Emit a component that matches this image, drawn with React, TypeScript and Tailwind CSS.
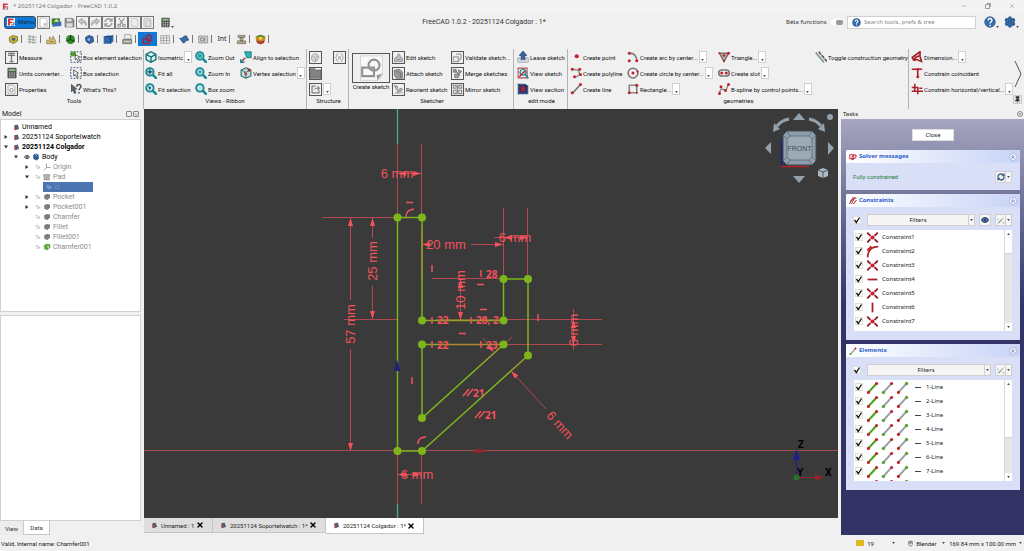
import React from 'react';
import { ChevronsUp, Eye, Minus, Pin, RefreshCw, Settings, X } from 'lucide-react';

const RED = '#a8202a';
const TEAL = '#168a94';
const GREY = '#9a9a9a';

const dot = (x: number, y: number, r = 2, fill = '#c4202c') => <circle cx={x} cy={y} r={r} fill={fill} />;

const lens = (inner: React.ReactNode) => (
  <>
    <path d="M9.5 9.5 L14.5 14.5" stroke={TEAL} strokeWidth="3.4" strokeLinecap="round" />
    <circle cx="6.5" cy="6.5" r="5" fill="#bfe6ea" stroke={TEAL} strokeWidth="2.4" />
    {inner}
  </>
);

const calculator = (
  <>
    <rect x="2" y="1" width="12" height="14" rx="1" fill="#4c524c" />
    <rect x="3.5" y="2.5" width="9" height="3" fill="#8fae8b" />
    <path d="M4 8h2M7 8h2M10 8h2M4 10.500h2M7 10.500h2M10 10.500h2M4 13h2M7 13h2M10 13h2" stroke="#c9cdc9" strokeWidth="1.3" />
  </>
);

const shape: Record<string, React.ReactNode> = {
  logo: (
    <>
      <path d="M2 1h11v3.500H6v3h5v3H6V15H2z" fill="#d8343c" />
      <path d="M13 8v6H8" fill="none" stroke="#4468b0" strokeWidth="2" />
    </>
  ),
  menuLogo: (
    <>
      <rect width="16" height="16" fill="#f4f4f4" />
      <path d="M2 1h11v3.500H6v3h5v3H6V15H2z" fill="#d8343c" />
      <path d="M14 8v6H8" fill="none" stroke="#4468b0" strokeWidth="2" />
    </>
  ),
  file: (
    <>
      <path d="M3 1.500h7l3 3v10H3z" fill="#fff" stroke="#a9a9a9" />
      <path d="M10 8v5M7.500 10.500h5" stroke="#9a9a9a" />
    </>
  ),
  open: (
    <>
      <rect x="1" y="2" width="12" height="9" fill="#3f7f38" />
      <path d="M2 10 L15 6v7l-13 1z" fill="#3c6db5" />
      <path d="M4 7l4-4 4 4z" fill="#d7e8a8" />
    </>
  ),
  save: (
    <>
      <path d="M1.500 2h11l2 2v10.500h-13z" fill="#8c8c8c" stroke="#6e6e6e" />
      <path d="M4 2.500h7v4H4zM3.500 9h9v5h-9z" fill="#dedede" />
    </>
  ),
  undo: <path d="M2 6l5-4v2.500c5 0 7 3 6.500 8-1-3-3-4.500-6.500-4.500V11z" fill="#c9c9c9" stroke="#8f8f8f" />,
  redo: <path d="M14 6L9 2v2.500c-5 0-7 3-6.500 8 1-3 3-4.500 6.500-4.500V11z" fill="#c9c9c9" stroke="#8f8f8f" />,
  refresh: (
    <>
      <path d="M3 7a5.500 5.500 0 0 1 9-3M13 9a5.500 5.500 0 0 1-9 3" fill="none" stroke={GREY} strokeWidth="2.400" />
      <path d="M14 1v6H8.500zM2 15V9h5.500z" fill={GREY} />
    </>
  ),
  cut: (
    <>
      <path d="M4 1.500L10.500 11M12 1.500L5.500 11" stroke="#8b8b8b" strokeWidth="1.600" />
      <circle cx="4.500" cy="12.500" r="2" fill="none" stroke="#8b8b8b" strokeWidth="1.500" />
      <circle cx="11.500" cy="12.500" r="2" fill="none" stroke="#8b8b8b" strokeWidth="1.500" />
    </>
  ),
  copy: <path d="M3 2h8v3h2v9H5v-2H3z" fill="#ececec" stroke="#bdbdbd" />,
  paste: <path d="M3 2h9v12H3zM6 5h7v9H6z" fill="#e4e4e4" stroke="#b0b0b0" />,
  calculator,
  help: (
    <>
      <circle cx="8" cy="8" r="7" fill="#3570ad" stroke="#234f80" />
      <path d="M5.500 6c0-3.500 5-3.500 5 0 0 2-2.500 1.800-2.500 4M8 11.500v2" fill="none" stroke="#fff" strokeWidth="1.800" />
    </>
  ),
  // workbench tabs
  wbNut: (
    <>
      <path d="M2 5l5-3 7 2v6l-6 4-6-3z" fill="#c9b62b" stroke="#6a6118" />
      <circle cx="8" cy="7.500" r="2.500" fill="#4d60a5" />
    </>
  ),
  wbSpring: <path d="M1 4c4-3 8 3 13 0M1 8c4-3 8 3 13 0M1 12c4-3 8 3 13 0M4 2v12M9 2v12" fill="none" stroke="#8d8f8a" strokeWidth="1.200" />,
  wbDraft: (
    <>
      <path d="M1 14V9h4V4l5 4v-5l4 7v4z" fill="#d9bf6b" stroke="#8a7942" />
      <path d="M5 11h6" stroke="#6d5f30" />
    </>
  ),
  wbGreen: (
    <>
      <circle cx="8" cy="8" r="6.500" fill="#2f8a25" />
      <path d="M8 8V1.500M8 8l6 3M8 8l-6 2" stroke="#173f12" strokeWidth="1.500" />
    </>
  ),
  wbPart: (
    <>
      <path d="M2 5l5-3 6 2 1 7-6 3-5-3z" fill="#3465a4" stroke="#1c3c66" />
      <circle cx="7" cy="8" r="2" fill="#8db3df" />
    </>
  ),
  wbBox: (
    <>
      <path d="M1 4l5-2h9v9l-4 3H1z" fill="#2f67ad" />
      <path d="M1 4h10v10M11 4l4-2" fill="none" stroke="#153760" />
    </>
  ),
  wbPrint: (
    <>
      <path d="M4 1h9v6H4z" fill="#f3f3f3" stroke="#888" />
      <path d="M1 8h13v6H1z" fill="#9c9f96" stroke="#666" />
      <path d="M3 11h9" stroke="#eee" />
    </>
  ),
  wbSketch: (
    <>
      <circle cx="10" cy="6" r="4.200" fill="none" stroke="#a52338" strokeWidth="2" />
      <path d="M2 7h8v7H2z" fill="none" stroke="#a52338" strokeWidth="2" />
    </>
  ),
  wbSheet: <path d="M1 2.500h13v11H1zM1 6h13M1 9.500h13M5 2.500v11M9.500 2.500v11" fill="#f5f5f5" stroke="#8e8e8e" />,
  wbSurface: <path d="M1 6c4 2 6-5 10-3l3 6c-4-1-5 5-8 4z" fill="#3d6ba8" stroke="#20406d" />,
  wbDrawing: (
    <>
      <path d="M1 3h13v10H1z" fill="#d5d8d2" stroke="#777" />
      <circle cx="6" cy="8" r="2.500" fill="none" stroke="#556" />
      <path d="M10 5v6" stroke="#556" />
    </>
  ),
  wbBeam: <path d="M3 2h10v3H3zM6 5h4v5H6zM2 10h12v4H2z" fill="#b3aa8d" stroke="#6e674e" />,
  wbLayers: (
    <>
      <path d="M1 3h14v4l-2 6-5 2-5-2-2-6z" fill="#c98a25" />
      <path d="M2 3l6-2 6 2-6 3z" fill="#3b8f3b" />
      <path d="M2 9l6 2 6-2-1 4-5 2-5-2z" fill="#a8412e" />
      <circle cx="8" cy="6" r="2.500" fill="#e9d34a" />
    </>
  ),
  // ribbon commands
  measure: <path d="M3 2h10M3 5h10M8 5v9M5 14h6M8 2v3" stroke="#777" strokeWidth="1.800" fill="none" />,
  properties: (
    <>
      <path d="M3 1.500h7l3 3v10H3z" fill="#f4f4f4" stroke="#999" />
      <circle cx="8" cy="9" r="2.500" fill="none" stroke="#888" strokeWidth="1.300" />
    </>
  ),
  boxElement: (
    <>
      <rect x="1" y="1" width="14" height="14" fill="none" stroke="#24437a" strokeWidth="1.500" strokeDasharray="2 2" />
      <path d="M1 1h7v6H1z" fill="#54a02f" />
      <path d="M7 5l6 3-2 1 2 4-2 1-2-4-2 2z" fill="#fff" stroke="#333" />
    </>
  ),
  boxSelect: (
    <>
      <rect x="1" y="1" width="14" height="14" fill="none" stroke="#24437a" strokeWidth="1.500" strokeDasharray="2 2" />
      <path d="M5 4l6 4-2 1 2 4-2 1-2-4-2 2z" fill="#fff" stroke="#333" />
    </>
  ),
  whats: (
    <>
      <path d="M2 2l7 6-3 .5 2 4.500-2 1-2-4.500-2 2z" fill="#5c6670" stroke="#39414a" />
      <path d="M9 5c0-4 6-4 5.500 0 0 2-2.500 2-2.500 4.500M12 12v2" fill="none" stroke="#4a545e" strokeWidth="2" />
    </>
  ),
  isometric: (
    <>
      <path d="M8 1l6.500 3.500v7L8 15l-6.500-3.500v-7z" fill="#d9f2f3" stroke="#0f6c74" strokeWidth="1.800" />
      <path d="M1.500 4.500L8 8l6.500-3.500M8 8v7" fill="none" stroke="#0f6c74" strokeWidth="1.800" />
    </>
  ),
  fitAll: lens(<path d="M6.500 3v7M3 6.500h7" stroke="#0b4f56" strokeWidth="1.600" />),
  fitSel: lens(<path d="M4 4l4 1.500-1.500 4z" fill="#0b4f56" />),
  zoomOut: lens(<circle cx="6.500" cy="6.500" r="3.200" fill="#2fa7a2" />),
  zoomIn: lens(<circle cx="6.500" cy="6.500" r="2.500" fill="#56a8ae" />),
  boxZoom: lens(null),
  align: (
    <>
      <path d="M6 1h9v8H9z" fill="#2bb5bd" stroke="#0d6c74" />
      <path d="M1 15l6-6" stroke="#a03a3a" strokeWidth="2" />
      <path d="M1 11v4h5" fill="none" stroke={TEAL} strokeWidth="2" />
    </>
  ),
  vertex: (
    <>
      <path d="M8 1l6.500 3v8L8 15l-6.500-3V4z" fill="#bfe0dc" stroke="#2a6a6a" strokeWidth="1.500" />
      <path d="M1.500 4L8 7l6.500-3M8 7v8" stroke="#2a6a6a" fill="none" />
      <path d="M5 6l5 3-3 3z" fill="#b8383c" />
      {dot(12, 4, 2)}
    </>
  ),
  structPart: <path d="M3 5l4-3 4 2 2 4-3 5-5 1-3-4zM4 6l4 2 4-2M8 8v5" fill="#d9d9d9" stroke="#999" strokeWidth="1.200" />,
  structGroup: <path d="M0 1h7l1 2h8v12H0z" fill="#828282" stroke="#646464" />,
  structLink: (
    <>
      <path d="M8 3H3v10h10V9" fill="none" stroke="#7c7c7c" strokeWidth="1.800" />
      <path d="M6 10c0-4 2-5 5-5V2l4 4-4 4V7c-2 0-4 0-5 3z" fill="#8a8a8a" />
    </>
  ),
  structVar: <path d="M6 2C3 2 5 7 2 8c3 1 1 6 4 6M10 2c3 0 1 5 4 6-3 1-1 6-4 6M7 6v5M9 6v5" fill="none" stroke="#999" strokeWidth="1.300" />,
  newSketch: (
    <>
      <path d="M3 1h26v23l-5 6H3z" fill="#f8f8f8" stroke="#cfcfcf" />
      <path d="M29 22l-6 8-1-6z" fill="#999" />
      <circle cx="19" cy="12" r="6.500" fill="none" stroke="#929292" strokeWidth="2.500" />
      <path d="M5 15h14v10H5z" fill="none" stroke="#929292" strokeWidth="2.500" />
    </>
  ),
  editSketch: <path d="M2 9v5h12V9l-3-1V6l-3-4-2 5-4 2zM5 11h6" fill="#bbb" stroke="#888" />,
  attachSketch: <path d="M2 3l8-1 4 4v9H5l-3-4zM5 5l6 2v7" fill="#9a9a9a" stroke="#666" />,
  reorient: <path d="M2 2l5 2-2 4zM6 9l6-3 2 2-7 4zM3 13h8M11 10l3 4" fill="#bbb" stroke="#8b8b8b" strokeWidth="1.400" />,
  validate: <path d="M2 7h7v7H2zM6 3h7v8M8 11l2 2 4-6" fill="none" stroke="#9d9d9d" strokeWidth="1.700" />,
  merge: <path d="M2 2h4v4H2zM9 3l5 2-3 3zM4 9h5v5H4zM7 6l4 6M6 5l6 5" fill="#aaa" stroke="#6e6e6e" strokeWidth="1.300" />,
  mirror: <path d="M2 2h4v4H2zM10 2h4v4h-4zM2 9h4v5H2zM10 9h4v5h-4zM8 1v14" fill="none" stroke="#8a8a8a" strokeWidth="1.500" />,
  leave: (
    <>
      <path d="M1 9v6h14V9h-3v3H4V9z" fill="#e6e6e6" stroke="#8898a8" />
      <path d="M8 0l5 6h-2.500v5h-5V6H3z" fill="#39669c" stroke="#24446c" />
    </>
  ),
  viewSketch: (
    <>
      <path d="M1.500 1.500h12v13h-12z" fill="#f7f3f3" stroke="#b64a52" strokeWidth="1.400" />
      <circle cx="8" cy="7" r="4" fill="#c4e5e8" stroke={TEAL} strokeWidth="1.600" />
      <path d="M3 13l8-8" stroke="#c4202c" strokeWidth="1.800" />
      <path d="M11 10l4 5" stroke={TEAL} strokeWidth="2.400" />
    </>
  ),
  viewSection: (
    <>
      <path d="M1 1h10l4 3v11H1z" fill="#36578f" />
      <path d="M4 4h8v8H4z" fill="#9c2740" stroke="#2c2348" strokeWidth="1.500" />
      <path d="M1 1l3 3M15 4l-3 0M1 15l3-3" stroke="#1e3158" />
    </>
  ),
  point: dot(9, 7, 2.8),
  polyline: (
    <>
      <path d="M3 3l8 1 2 6-6 4" fill="none" stroke="#888" strokeWidth="1.800" />
      {dot(3, 3)}{dot(13, 3)}{dot(14, 10)}{dot(6, 13)}
    </>
  ),
  line: (
    <>
      <path d="M3 14L14 2" stroke="#777" strokeWidth="2.400" />
      {dot(3, 13)}{dot(14, 2)}
    </>
  ),
  arc: (
    <>
      <path d="M4 3c6 0 9 4 9 10" fill="none" stroke="#888" strokeWidth="2.400" />
      {dot(3, 3)}{dot(13, 13)}{dot(3, 13)}
    </>
  ),
  circle: (
    <>
      <circle cx="8" cy="8" r="6.500" fill="none" stroke="#7d7272" strokeWidth="2" />
      {dot(8, 8, 2)}{dot(14, 6, 1.5)}
    </>
  ),
  rectangle: (
    <>
      <path d="M3 3h10v10H3z" fill="none" stroke="#888" strokeWidth="2.200" />
      {dot(13, 3)}{dot(3, 13)}{dot(13, 13, 1.3)}
    </>
  ),
  triangle: (
    <>
      <path d="M2 3h12L8 14z" fill="#b9b3b0" stroke="#77706c" strokeWidth="2" />
      {dot(8, 6, 1.8)}{dot(14, 3)}{dot(2, 3, 1.4)}{dot(8, 13, 1.4)}
    </>
  ),
  slot: (
    <>
      <rect x="1" y="4" width="14" height="8" rx="4" fill="none" stroke="#777" strokeWidth="2.200" />
      {dot(5, 8)}{dot(11, 8)}
    </>
  ),
  bspline: (
    <>
      <path d="M2 14c1-8 4-6 6-5s4 0 5-6" fill="none" stroke="#888" strokeWidth="2" />
      {dot(2, 14)}{dot(4, 5)}{dot(10, 10)}{dot(14, 2)}
    </>
  ),
  construction: (
    <>
      <path d="M1 2l11 13" stroke="#93a0a8" strokeWidth="2.600" />
      <path d="M5 1l11 13" stroke="#46525c" strokeWidth="2" strokeDasharray="5 1" />
    </>
  ),
  dimension: <path d="M1 9l11-8v5L5 9M1 9l13 5-2-7M2 11l4 2" fill="none" stroke={RED} strokeWidth="2.200" />,
  coincident: (
    <>
      <path d="M1 3h14M9 3v9" stroke={RED} strokeWidth="2.200" />
      {dot(9, 13, 2)}
      {dot(9, 3, 1.8)}
    </>
  ),
  horver: <path d="M5 1v10M1 11h15M9 5v10M1 6h8M11 7h4" stroke={RED} strokeWidth="2" fill="none" />,
  // constraint and element lists
  cross: (
    <>
      <path d="M1.500 2l4 4M14.500 2l-4 4M1.500 14l4-4M14.500 14l-4-4" stroke="#8e1822" strokeWidth="2.200" />
      {dot(8, 8, 2.6, '#d01f2b')}
    </>
  ),
  tangent: (
    <>
      <path d="M2 15C2 8 6 2 15 2" fill="none" stroke={RED} strokeWidth="2.200" />
      <path d="M2 7l5-5" stroke="#d01f2b" strokeWidth="3.400" />
    </>
  ),
  horizontal: <path d="M2 8h12" stroke={RED} strokeWidth="2.200" />,
  vertical: <path d="M8 2v12" stroke={RED} strokeWidth="2.200" />,
  constraints: <path d="M1 14L6 4M5 14l5-10M9 14l6-8M2 9l10-7M6 2l9 0" stroke={RED} strokeWidth="2" fill="none" />,
  solver: (
    <>
      <path d="M1.500 3.500h8v8h-8z" fill="#fff" stroke="#c4202c" strokeWidth="1.800" />
      <path d="M6 14V8l3-4h5v5z" fill="none" stroke="#b01c28" strokeWidth="1.800" />
    </>
  ),
  edge: (
    <>
      <path d="M3 14L13 3" stroke="#4aa31c" strokeWidth="2.600" />
      {dot(3, 14, 1.9)}{dot(13, 3, 1.9)}
    </>
  ),
  edgeStart: (
    <>
      <path d="M3 14L13 3" stroke="#9a9aa4" strokeWidth="2.400" />
      {dot(3, 14, 2.1, '#5fa638')}{dot(13, 3, 1.9)}
    </>
  ),
  edgeEnd: (
    <>
      <path d="M3 14L13 3" stroke="#9a9aa4" strokeWidth="2.400" />
      {dot(3, 14, 1.9)}{dot(13, 3, 2.1, '#5fa638')}
    </>
  ),
  wand: <path d="M3 13L13 3M2 5l3 2M11 10l4 4M5 13l6-8" stroke="#8f9498" strokeWidth="1.500" fill="none" />,
  // tree
  doc: (
    <>
      <path d="M3 3l8-2 3 10-8 3z" fill="#5b6070" />
      <path d="M3 3v10l4 1z" fill="#a33" />
      <path d="M11 1l3 4" stroke="#eee" strokeWidth="2" />
    </>
  ),
  hidden: <path d="M1 5c4-2 9 0 13 6M3 9c3 3 6 3 10 1" fill="none" stroke="#9a9a9a" strokeWidth="1.800" />,
  body: (
    <>
      <path d="M2 5l4-4 7 2 1 8-5 4-6-3z" fill="#2f5f98" />
      <path d="M6 2l4 4" stroke="#8fb4de" strokeWidth="2" />
    </>
  ),
  axes: <path d="M7 1v8l-5 5M7 9h8" fill="none" stroke="#9b9b9b" strokeWidth="1.800" />,
  pad: <path d="M1 3h13v4H1zM2 9h11v5H2z" fill="#adadad" stroke="#8a8a8a" />,
  solid: <path d="M2 5l5-3 7 1v6l-5 5-6-2z" fill="#7d7d7d" />,
  solidTip: (
    <>
      <path d="M2 5l5-3 7 1v6l-5 5-6-2z" fill="#5fa638" stroke="#5fa638" />
      <path d="M8 6l4 1-1 5z" fill="#dff0d4" />
    </>
  ),
  mouse: <path d="M4 3h8v7c0 5-8 5-8 0zM8 3v4M4 7h8" fill="none" stroke="#444" strokeWidth="1.400" />,
};

const Icon = ({ name, className = 'size-3' }: { name: string; className?: string }) => (
  <svg viewBox={name === 'newSketch' ? '0 0 32 32' : '0 0 16 16'} className={`shrink-0 ${className}`} aria-hidden="true">
    {shape[name]}
  </svg>
);

const Caret = ({ className = '' }: { className?: string }) => (
  <svg viewBox="0 0 4 3" className={`h-[2px] w-[3px] shrink-0 ${className}`} aria-hidden="true">
    <path d="M0 0h4L2 3z" fill="#444" />
  </svg>
);

type Command = { icon: string; label: string; framed?: boolean; drop?: boolean };

const RibbonButton = ({ icon, label, framed, drop }: Command) => (
  <div className="flex h-4 items-center gap-px whitespace-nowrap">
    <button type="button" className="flex items-center gap-px">
      <span className={`flex size-[13px] shrink-0 items-center justify-center ${framed ? 'border border-[#555]' : ''}`}>
        <Icon name={icon} className={framed ? 'size-[11px]' : 'size-3'} />
      </span>
      {label}
    </button>
    {drop && (
      <button type="button" aria-label={`${label} options`} className="flex h-3 w-2 items-end justify-center border border-[#d0d0d0] bg-white pb-px">
        <Caret />
      </button>
    )}
  </div>
);

const RibbonColumn = ({ items, className = '' }: { items: Command[]; className?: string }) => (
  <div className={`shrink-0 ${className}`}>
    {items.map((item) => (
      <RibbonButton key={item.label} {...item} />
    ))}
  </div>
);

const RibbonGroup = ({ title, className, children }: { title: string; className: string; children: React.ReactNode }) => (
  <section aria-label={title} className={`flex shrink-0 flex-col border-r border-[#b4b4b4] ${className}`}>
    <div className="flex h-12">{children}</div>
    <div className="text-center leading-[8px]">{title}</div>
  </section>
);

const structureButtons = [
  { icon: 'structPart', label: 'Create part' },
  { icon: 'structGroup', label: 'Create group' },
  { icon: 'structLink', label: 'Make link' },
];

const Ribbon = () => (
  <div className="flex h-[60px] overflow-hidden font-['Roboto',sans-serif] text-[6px] text-[#111]">
    <RibbonGroup title="Tools" className="w-[144px] pl-[5px]">
      <RibbonColumn
        className="w-16"
        items={[
          { icon: 'measure', label: 'Measure', framed: true },
          { icon: 'calculator', label: 'Units converter...' },
          { icon: 'properties', label: 'Properties', framed: true },
        ]}
      />
      <RibbonColumn
        items={[
          { icon: 'boxElement', label: 'Box element selection' },
          { icon: 'boxSelect', label: 'Box selection' },
          { icon: 'whats', label: "What's This?" },
        ]}
      />
    </RibbonGroup>
    <RibbonGroup title="Views - Ribbon" className="w-[163px]">
      <RibbonColumn
        className="w-[50px]"
        items={[
          { icon: 'isometric', label: 'Isometric', drop: true },
          { icon: 'fitAll', label: 'Fit all' },
          { icon: 'fitSel', label: 'Fit selection' },
        ]}
      />
      <RibbonColumn
        className="w-[45px]"
        items={[
          { icon: 'zoomOut', label: 'Zoom Out' },
          { icon: 'zoomIn', label: 'Zoom In' },
          { icon: 'boxZoom', label: 'Box zoom' },
        ]}
      />
      <RibbonColumn
        items={[
          { icon: 'align', label: 'Align to selection' },
          { icon: 'vertex', label: 'Vertex selection', drop: true },
        ]}
      />
    </RibbonGroup>
    <RibbonGroup title="Structure" className="w-[42px] pl-[2px]">
      <div className="w-6">
        {structureButtons.map(({ icon, label }) => (
          <div key={icon} className="flex h-4 items-center gap-px">
            <button type="button" aria-label={label} className="flex size-[13px] items-center justify-center border border-[#555]">
              <Icon name={icon} className="size-[11px]" />
            </button>
            {icon === 'structLink' && (
              <button type="button" aria-label="Link options" className="flex h-3 w-2 items-end justify-center border border-[#d0d0d0] bg-white pb-px">
                <Caret />
              </button>
            )}
          </div>
        ))}
      </div>
      <div className="flex h-4 items-center">
        <button type="button" aria-label="Variable set" className="flex size-[13px] items-center justify-center border border-[#555]">
          <Icon name="structVar" className="size-[11px]" />
        </button>
      </div>
    </RibbonGroup>
    <RibbonGroup title="Sketcher" className="w-[165px] pl-[2px]">
      <button type="button" className="flex w-[40px] flex-col items-center pt-1 leading-[8px] whitespace-nowrap">
        <span className="flex h-[30px] w-[38px] items-center justify-center border border-[#555]">
          <Icon name="newSketch" className="size-[27px]" />
        </span>
        Create sketch
      </button>
      <RibbonColumn
        className="ml-px w-[59px]"
        items={[
          { icon: 'editSketch', label: 'Edit sketch', framed: true },
          { icon: 'attachSketch', label: 'Attach sketch', framed: true },
          { icon: 'reorient', label: 'Reorient sketch', framed: true },
        ]}
      />
      <RibbonColumn
        items={[
          { icon: 'validate', label: 'Validate sketch...', framed: true },
          { icon: 'merge', label: 'Merge sketches', framed: true },
          { icon: 'mirror', label: 'Mirror sketch', framed: true },
        ]}
      />
    </RibbonGroup>
    <RibbonGroup title="edit mode" className="w-[54px] pl-[2px]">
      <RibbonColumn
        items={[
          { icon: 'leave', label: 'Leave sketch' },
          { icon: 'viewSketch', label: 'View sketch' },
          { icon: 'viewSection', label: 'View section' },
        ]}
      />
    </RibbonGroup>
    <RibbonGroup title="geometries" className="w-[341px] pl-px">
      <RibbonColumn
        className="w-[57px]"
        items={[
          { icon: 'point', label: 'Create point' },
          { icon: 'polyline', label: 'Create polyline' },
          { icon: 'line', label: 'Create line' },
        ]}
      />
      <RibbonColumn
        className="w-[91px]"
        items={[
          { icon: 'arc', label: 'Create arc by center...', drop: true },
          { icon: 'circle', label: 'Create circle by center...', drop: true },
          { icon: 'rectangle', label: 'Rectangle...', drop: true },
        ]}
      />
      <RibbonColumn
        className="w-[97px]"
        items={[
          { icon: 'triangle', label: 'Triangle...', drop: true },
          { icon: 'slot', label: 'Create slot', drop: true },
          { icon: 'bspline', label: 'B-spline by control points...', drop: true },
        ]}
      />
      <RibbonColumn items={[{ icon: 'construction', label: 'Toggle construction geometry' }]} />
    </RibbonGroup>
    <div className="flex min-w-0 flex-1 justify-between pl-px">
      <RibbonColumn
        items={[
          { icon: 'dimension', label: 'Dimension...', drop: true },
          { icon: 'coincident', label: 'Constrain coincident' },
          { icon: 'horver', label: 'Constrain horizontal/vertical...', drop: true },
        ]}
      />
      <div className="flex h-[55px] w-[11px] shrink-0 flex-col items-end justify-between pt-[11px] pr-[2px]">
        <button type="button" aria-label="More commands">
          <svg viewBox="0 0 8 28" className="h-7 w-2">
            <path d="M1 1l6 13-6 13" fill="none" stroke="#555" />
          </svg>
        </button>
        <button type="button" aria-label="Pin ribbon" className="flex size-[9px] items-center justify-center border border-[#ccc] bg-[#e4e4e4]">
          <Pin className="size-[7px] fill-[#333] text-[#333]" />
        </button>
      </div>
    </div>
  </div>
);

const quickTools = [
  { icon: 'file', label: 'New', framed: true },
  { icon: 'open', label: 'Open', framed: false },
  { icon: 'save', label: 'Save', framed: false },
  { icon: 'undo', label: 'Undo', framed: true },
  { icon: 'redo', label: 'Redo', framed: true },
  { icon: 'refresh', label: 'Refresh', framed: true },
  { icon: 'cut', label: 'Cut', framed: true },
  { icon: 'copy', label: 'Copy', framed: true },
  { icon: 'paste', label: 'Paste', framed: true },
];

const workbenches = ['wbNut', 'wbSpring', 'wbDraft', 'wbGreen', 'wbPart', 'wbBox', 'wbPrint', 'wbSketch', 'wbSheet', 'wbSurface', 'wbDrawing', 'Int', 'wbBeam', 'wbLayers'];

const Header = () => (
  <header>
    <div className="flex h-3 items-center bg-[#f3f3f3] pl-[2px] text-[6px] text-[#777]">
      <Icon name="logo" className="size-[7px]" />
      <span className="pl-1">* 20251124 Colgador - FreeCAD 1.0.2</span>
      <div className="ml-auto flex gap-[18px] pr-[9px] text-[#888]">
        <button type="button" aria-label="Minimize"><Minus className="size-[6px]" /></button>
        <button type="button" aria-label="Restore">
          <svg viewBox="0 0 6 6" className="size-[6px]">
            <path d="M.5 1.500h4v4h-4zM2 .5h3.500V4" fill="none" stroke="#888" strokeWidth=".8" />
          </svg>
        </button>
        <button type="button" aria-label="Close window"><X className="size-[6px]" /></button>
      </div>
    </div>
    <div className="flex h-5 items-center text-[6px] text-[#333]">
      <div className="flex w-[184px] items-center pl-1">
        <button type="button" className="mr-px flex h-[13px] w-8 items-center gap-[3px] rounded-[3px] border border-[#3a4a5a] bg-[#0d78d6] pl-[2px] text-[#123]">
          <Icon name="menuLogo" className="size-2" />
          Menu
        </button>
        {quickTools.map(({ icon, label, framed }) => (
          <button key={icon} type="button" aria-label={label} className={`flex size-[13px] items-center justify-center ${framed ? 'border border-[#777]' : ''}`}>
            <Icon name={icon} className="size-[11px]" />
          </button>
        ))}
        <button type="button" aria-label="Calculator" className="ml-[6px] flex items-end">
          <Icon name="calculator" className="size-[11px]" />
          <Caret />
        </button>
      </div>
      <div className="flex-1 text-center font-['Roboto',sans-serif] text-[7px]">FreeCAD 1.0.2 - 20251124 Colgador : 1*</div>
      <div className="flex w-60 items-center pl-[2px]">
        <label className="flex w-[61px] items-center justify-between whitespace-nowrap">
          Béta functions
          <span className="mr-1 flex h-[6px] w-3 items-center rounded-[3px] bg-white">
            <input type="checkbox" className="ml-auto h-[5px] w-[7px] appearance-none rounded-[2px] bg-[#999]" />
          </span>
        </label>
        <div className="flex h-[13px] flex-1 items-center gap-[3px] border border-[#cfcfcf] bg-white pl-1">
          <Icon name="help" className="size-[9px]" />
          <input type="search" aria-label="Search tools" placeholder="Search tools, prefs & tree" className="min-w-0 flex-1 outline-none placeholder:text-[#888]" />
        </div>
        <button type="button" aria-label="Help" className="ml-2 flex w-[20px] items-end">
          <Icon name="help" className="size-3" />
          <Caret />
        </button>
        <button type="button" aria-label="Settings" className="flex w-5 items-end">
          <Settings className="size-3 fill-[#3570ad] text-[#2d5f95]" strokeWidth={3} />
          <Caret />
        </button>
      </div>
    </div>
    <nav className="flex h-[17px] items-center pb-[3px] pl-[5px]">
      {workbenches.map((wb) => (
        <button
          key={wb}
          type="button"
          aria-label={wb}
          className={
            wb === 'wbSketch'
              ? 'flex h-[14px] w-[19px] items-center justify-center bg-[#0f78d4]'
              : 'flex h-[14px] w-[19px] items-center justify-center gap-[2px]'
          }
        >
          {wb === 'Int' ? <span className="text-[7px] text-[#222]">Int</span> : <Icon name={wb} className="size-[11px]" />}
          {wb !== 'wbSketch' && <span className="h-2 w-px bg-[#777]" />}
        </button>
      ))}
    </nav>
    <Ribbon />
  </header>
);

type Node = { label: string; depth: string; icon: string; open?: boolean; closed?: boolean; eye?: 'on' | 'off'; tone: string };

const tree: Node[] = [
  { label: 'Unnamed', depth: 'pl-0', icon: 'doc', tone: 'text-black' },
  { label: '20251124 SoporteIwatch', depth: 'pl-0', icon: 'doc', closed: true, tone: 'text-black' },
  { label: '20251124 Colgador', depth: 'pl-0', icon: 'doc', open: true, tone: 'font-bold text-black' },
  { label: 'Body', depth: 'pl-[10px]', icon: 'body', open: true, eye: 'on', tone: 'text-black' },
  { label: 'Origin', depth: 'pl-[21px]', icon: 'axes', closed: true, eye: 'off', tone: 'text-[#8a8a8a]' },
  { label: 'Pad', depth: 'pl-[21px]', icon: 'pad', open: true, eye: 'off', tone: 'text-[#8a8a8a]' },
  { label: 'Sketch', depth: '', icon: '', tone: '' },
  { label: 'Pocket', depth: 'pl-[21px]', icon: 'solid', closed: true, eye: 'off', tone: 'text-[#8a8a8a]' },
  { label: 'Pocket001', depth: 'pl-[21px]', icon: 'solid', closed: true, eye: 'off', tone: 'text-[#8a8a8a]' },
  { label: 'Chamfer', depth: 'pl-[21px]', icon: 'solid', eye: 'off', tone: 'text-[#8a8a8a]' },
  { label: 'Fillet', depth: 'pl-[21px]', icon: 'solid', eye: 'off', tone: 'text-[#8a8a8a]' },
  { label: 'Fillet001', depth: 'pl-[21px]', icon: 'solid', eye: 'off', tone: 'text-[#8a8a8a]' },
  { label: 'Chamfer001', depth: 'pl-[21px]', icon: 'solidTip', eye: 'off', tone: 'text-[#8a8a8a]' },
];

const TreeRow = ({ node }: { node: Node }) => {
  if (!node.icon) {
    return (
      <li aria-label={node.label} className="ml-[42px] flex h-[10px] w-[50px] items-center gap-[3px] bg-[#4c74b0] pl-[3px]">
        <svg viewBox="0 0 16 16" className="size-[6px]"><path d="M1 5c4-2 9 0 13 6M3 9c3 3 6 3 10 1" fill="none" stroke="#c9d6ea" strokeWidth="2" /></svg>
        <span className="size-1 border border-[#6b86ae]" />
      </li>
    );
  }
  return (
    <li className={`flex h-[10px] items-center whitespace-nowrap ${node.depth}`}>
      <span className="flex w-[11px] pl-[3px]">
        {(node.open || node.closed) && (
          <svg viewBox="0 0 4 4" className="size-[4px]">
            <path d={node.open ? 'M0 .5h4L2 3.500z' : 'M.5 0v4L3.500 2z'} fill="#333" />
          </svg>
        )}
      </span>
      {node.eye && (
        <span className="flex w-[9px] justify-center">
          {node.eye === 'on' ? <Eye className="size-[6px] text-[#222]" strokeWidth={3} /> : <Icon name="hidden" className="size-[6px]" />}
        </span>
      )}
      <Icon name={node.icon} className={node.eye ? 'ml-px mr-[2px] size-[8px]' : 'ml-px mr-[2px] size-[7px]'} />
      <span className={node.tone}>{node.label}</span>
    </li>
  );
};

const ModelDock = () => (
  <aside className="mr-[3px] flex w-[141px] shrink-0 flex-col font-['Roboto',sans-serif] text-[7px]">
    <div className="flex h-[10px] items-center justify-between pl-[2px] text-[#222]">
      Model
      <span className="flex gap-px pr-[2px]">
        <button type="button" aria-label="Float panel" className="size-[6px] rounded-[1px] border border-[#888]" />
        <button type="button" aria-label="Close panel" className="flex size-[6px] items-center justify-center rounded-[1px] border border-[#888]">
          <X className="size-[5px]" />
        </button>
      </span>
    </div>
    <ul className="h-[193px] border border-[#d0d0d0] bg-white pt-[2px]">
      {tree.map((node) => (
        <TreeRow key={node.label} node={node} />
      ))}
    </ul>
    <div className="mt-[3px] flex-1 border border-[#d0d0d0] bg-white" />
    <div className="flex h-[14px] text-[6px]" role="tablist">
      <button type="button" role="tab" className="w-6 border-r border-[#ccc] bg-[#ececec] text-[#333]">View</button>
      <button type="button" role="tab" aria-selected="true" className="w-[26px] border-r border-b border-[#c4c4c4] bg-white text-[#333]">Data</button>
    </div>
  </aside>
);

const DIM = '#f4525c';

const Arrow = ({ x, y, angle }: { x: number; y: number; angle: number }) => (
  <path d="M0 0L-8 -2.500V2.500z" fill={DIM} transform={`translate(${x} ${y}) rotate(${angle})`} />
);

const dimensions = [
  { text: '6 mm', x: 397, y: 173, angle: 0 },
  { text: '20 mm', x: 446, y: 244, angle: 0 },
  { text: '6 mm', x: 515, y: 237, angle: 0 },
  { text: '6 mm', x: 417, y: 474, angle: 0 },
  { text: '57 mm', x: 350, y: 324, angle: -90 },
  { text: '25 mm', x: 372, y: 261, angle: -90 },
  { text: '10 mm', x: 460, y: 290, angle: -90 },
  { text: '6 mm', x: 573, y: 330, angle: -90 },
  { text: '6 mm', x: 560, y: 425, angle: 48 },
];

const marks = [
  { text: '22', x: 437, y: 324 },
  { text: '28, 2', x: 476, y: 324 },
  { text: '22', x: 437, y: 349 },
  { text: '23', x: 486, y: 349 },
  { text: '28', x: 486, y: 278 },
  { text: '21', x: 473, y: 397 },
  { text: '21', x: 485, y: 419 },
];

const vertices = [
  [397.5, 217.5], [422, 217.5], [422, 320.5], [503.5, 320.5], [503.5, 279], [528, 279],
  [528, 355.5], [422, 451], [397.5, 451], [422, 344.5], [503.5, 344.5], [422, 418],
];

const Sketch = () => (
  <svg viewBox="144 109 694 409" className="h-full w-full" role="img" aria-label="Sketch">
    <path d="M144 450.500H838" stroke="#a84b4e" />
    <path d="M397.500 109V144M397.500 504V518" stroke="#4fae7c" strokeWidth="1.300" />
    <g fill="none" stroke="#b5484f">
      <path d="M397.500 144V217M421.500 144V217M397.500 451V504M421.500 451V504" />
      <path d="M322 217.500H397M344 319.500H397M503 319.500H602M503 344.500H602M432 278.500H503" />
      <path d="M503.500 208V279M527.500 208V279" />
      <path d="M350.500 218V300M350.500 349V451M372.500 218V238M372.500 286V320" />
      <path d="M397 173.500H421M471 244.500H503M494 237.500H528M397 474.500H421M460.500 279V320M573.500 309V350" />
      <path d="M511 371L546 409M483 338L493 351M500 348L512 337" />
    </g>
    <g fill="none" stroke="#7cb41c" strokeWidth="1.500">
      <path d="M422 320V217.500H397.500V451H422L528 355.500V279H503.500V320.500H422" />
      <path d="M422 344.500H503.500L422 418z" />
    </g>
    <path d="M422 230V278M512 370L528 355.500M480 366L503 345M436 344.500H500M436 320H498" stroke="#b98038" fill="none" />
    <path d="M397 359l-3 12h6z" fill="#20207c" />
    <path d="M489 451l-14-2.500v5z" fill="#94242a" />
    <Arrow x={421} y={173.500} angle={0} />
    <Arrow x={398} y={173.500} angle={180} />
    <Arrow x={503} y={244.500} angle={0} />
    <Arrow x={422} y={244.500} angle={180} />
    <Arrow x={504} y={237.500} angle={180} />
    <Arrow x={528} y={237.500} angle={0} />
    <Arrow x={398} y={474.500} angle={180} />
    <Arrow x={421} y={474.500} angle={0} />
    <Arrow x={350.500} y={218} angle={-90} />
    <Arrow x={350.500} y={451} angle={90} />
    <Arrow x={372.500} y={218} angle={-90} />
    <Arrow x={372.500} y={319} angle={90} />
    <Arrow x={460.500} y={280} angle={-90} />
    <Arrow x={460.500} y={320} angle={90} />
    <Arrow x={573.500} y={320} angle={-90} />
    <Arrow x={573.500} y={344} angle={90} />
    <Arrow x={511} y={371} angle={-133} />
    <Arrow x={494} y={352} angle={47} />
    <g fill={DIM} className="font-['Liberation_Sans',sans-serif] text-[13px]" textAnchor="middle">
      {dimensions.map(({ text, x, y, angle }) => (
        <text key={`${text}-${x}`} transform={`translate(${x} ${y}) rotate(${angle})`} dominantBaseline="central">
          {text}
        </text>
      ))}
    </g>
    <g fill={DIM} className="font-['Noto_Sans',sans-serif] text-[10px] font-bold">
      {marks.map(({ text, x, y }) => (
        <text key={`${x}-${y}`} x={x} y={y}>{text}</text>
      ))}
    </g>
    <g stroke={DIM} strokeWidth="1.500" fill="none">
      <path d="M406 202.500h7M432 265v7M481 270v7M477 284.500h7M432 317v7M471 317v7M480 309.500h7M538 314v7M459 333.500h7M432 341v7M481 341v7M412 377v7" />
      <path d="M406 217c0-5 2-7 8-8M418 444c0-4 2-7 8-7" />
      <path d="M463 396l6-7M467 396l6-7M475 418l6-7M479 418l6-7" />
    </g>
    {vertices.map(([x, y]) => (
      <circle key={`${x}-${y}`} cx={x} cy={y} r="4" fill="#7db51a" />
    ))}
  </svg>
);

const NavigationCube = () => (
  <svg viewBox="764 109 74 76" className="absolute top-0 right-0 h-[76px] w-[74px]" role="img" aria-label="Navigation cube">
    <g fill="#92a1ac">
      <path d="M799 113l6 7h-12zM765 148l6-6v12zM834 148l-6-6v13zM793 176h12l-6 7z" />
      <circle cx="830" cy="117" r="3" />
      <path d="M773 132l1-9 6 6zM825 132l-1-9-6 6z" />
    </g>
    <path d="M777 126c3-4 7-6 12-7M821 126c-3-4-7-6-12-7" fill="none" stroke="#92a1ac" strokeWidth="3" />
    <path d="M781.500 138V166" stroke="#20208c" strokeWidth="1.500" />
    <path d="M781 166.500H809" stroke="#b4232b" strokeWidth="1.500" />
    <path d="M787 131h25l4 4v26l-4 4h-25l-4-4v-26z" fill="#8e9eaa" stroke="#414b52" />
    <path d="M790 136h19l3 3v18l-3 3h-19l-3-3v-18zM787 131l3 5M812 131l-3 5M783 135l4 4M816 135l-4 4M783 161l4-4M816 161l-4-4M787 165l3-5M812 165l-3-5" fill="#9aabb6" stroke="#56636c" strokeWidth=".7" />
    <text x="799.500" y="151" textAnchor="middle" fill="#414b52" className="font-['Liberation_Sans',sans-serif] text-[7px]">FRONT</text>
    <path d="M823 168l5 2v6l-5 2-5-2v-6z" fill="#aebac2" />
    <path d="M818 170l5 2 5-2M823 172v6" fill="none" stroke="#4c565e" />
  </svg>
);

const AxisCross = () => (
  <svg viewBox="790 436 48 48" className="absolute right-0 bottom-[34px] size-12" role="img" aria-label="Axis cross">
    <path d="M796.500 477V456" stroke="#20208c" />
    <path d="M796.500 449l-3.500 11h7z" fill="#20208c" />
    <path d="M797 477.500H817" stroke="#94242a" />
    <path d="M824 477.500l-9-3v6z" fill="#94242a" />
    <circle cx="796.500" cy="477.500" r="3" fill="#28702c" />
    <g fill="#000" className="font-['Noto_Sans',sans-serif] text-[10px] font-bold">
      <text x="798" y="448">Z</text>
      <text x="797" y="476">Y</text>
      <text x="825" y="476">X</text>
    </g>
  </svg>
);

const docTabs = [
  { label: 'Unnamed : 1', width: 'w-[69px]', active: false },
  { label: '20251124 SoporteIwatch : 1*', width: 'w-[113px]', active: false },
  { label: '20251124 Colgador : 1*', width: 'w-[98px]', active: true },
];

const Viewport = () => (
  <main className="flex min-w-0 flex-1 flex-col">
    <div className="relative min-h-0 flex-1 overflow-hidden bg-[#3a3a3a]">
      <Sketch />
      <NavigationCube />
      <AxisCross />
    </div>
    <div className="flex h-[17px] items-start font-['Roboto',sans-serif] text-[6px] text-[#222]" role="tablist">
      {docTabs.map(({ label, width, active }) => (
        <div
          key={label}
          className={`flex items-center justify-between border-r border-b border-[#c4c4c4] pr-2 pl-[7px] whitespace-nowrap ${width} ${active ? 'h-4 bg-white' : 'h-[15px] bg-[#dedede]'}`}
        >
          <button type="button" role="tab" aria-selected={active} className="flex items-center gap-[3px]">
            <Icon name="doc" className="size-[7px]" />
            {label}
          </button>
          <button type="button" aria-label={`Close ${label}`}>
            <X className="size-[8px] text-black" strokeWidth={4} />
          </button>
        </div>
      ))}
    </div>
  </main>
);

const Tick = ({ label }: { label: string }) => (
  <span className="relative flex size-2 shrink-0">
    <input type="checkbox" defaultChecked aria-label={label} className="peer size-2 appearance-none border border-[#ddd] bg-white" />
    <svg viewBox="0 0 8 8" className="pointer-events-none absolute inset-0 hidden size-2 peer-checked:block">
      <path d="M1.500 4l1.800 2.500L6.500 1.500" fill="none" stroke="#111" strokeWidth="1.300" />
    </svg>
  </span>
);

const Panel = ({ title, icon, children }: { title: string; icon: string; children: React.ReactNode }) => (
  <section className="bg-[#d8dff7]">
    <h2 className="flex h-[13px] items-center gap-[2px] rounded-t-[2px] bg-linear-to-r from-white to-[#c8d4f7] px-[3px] font-bold text-[#2a5ccc]">
      <Icon name={icon} className="size-2" />
      {title}
      <button type="button" aria-label={`Collapse ${title}`} className="ml-auto flex size-2 items-center justify-center rounded-full border border-[#a9b9e4] bg-white">
        <ChevronsUp className="size-[6px] text-[#2b4488]" strokeWidth={3} />
      </button>
    </h2>
    {children}
  </section>
);

const SplitButton = ({ label, className = '', children }: { label: string; className?: string; children: React.ReactNode }) => (
  <div className={`flex h-3 ${className}`}>
    <button type="button" aria-label={label} className="flex min-w-[11px] flex-1 items-center justify-center border border-[#cfcfcf] bg-[#f5f5f5]">
      {children}
    </button>
    <button type="button" aria-label={`${label} menu`} className="flex w-[6px] items-center justify-center border border-l-0 border-[#cfcfcf] bg-[#f5f5f5]">
      <Caret />
    </button>
  </div>
);

const FilterBar = ({ label, withEye }: { label: string; withEye?: boolean }) => (
  <div className="flex items-center pt-[7px] pr-2 pl-[7px]">
    <Tick label={`Show ${label}`} />
    <SplitButton label={`${label} filters`} className="ml-[6px] flex-1">
      <span>Filters</span>
    </SplitButton>
    {withEye && (
      <button type="button" aria-label="Toggle visibility" className="ml-1 flex h-3 w-[12px] items-center justify-center border border-[#cfcfcf] bg-[#f5f5f5]">
        <Eye className="size-2 fill-[#8fa3c4] text-[#27477a]" strokeWidth={4} />
      </button>
    )}
    <SplitButton label={`${label} settings`} className="ml-1">
      <Icon name="wand" className="size-[9px]" />
    </SplitButton>
  </div>
);

const ListBox = ({ children, thumb }: { children: React.ReactNode; thumb: string }) => (
  <div className="mx-2 mt-1 mb-[9px] flex h-[101px] overflow-hidden bg-white">
    <ul className="min-w-0 flex-1 overflow-hidden">{children}</ul>
    <div className="flex w-2 flex-col border-l border-[#d8d8d8] bg-[#e6e6e6]">
      <span className="flex h-2 items-center justify-center bg-white"><Caret className="rotate-180" /></span>
      <span className={`border-b border-[#d0d0d0] bg-white ${thumb}`} />
      <span className="mt-auto flex h-2 items-center justify-center bg-white"><Caret /></span>
    </div>
  </div>
);

const constraintIcons = ['cross', 'tangent', 'cross', 'horizontal', 'cross', 'vertical', 'cross'];

const TasksDock = () => (
  <aside className="ml-[3px] flex w-[183px] shrink-0 flex-col text-[6px] text-[#222]">
    <div className="flex h-[10px] shrink-0 items-center justify-between pr-px pl-[2px]">
      Tasks
      <button type="button" aria-label="Close tasks" className="flex size-[6px] items-center justify-center rounded-full border border-[#888]">
        <X className="size-1" />
      </button>
    </div>
    <div className="flex min-h-0 flex-1 flex-col gap-1 overflow-hidden bg-linear-to-b from-[#a6a6c0] to-[#333366] to-45% pt-[10px] pr-1 pl-[5px]">
      <button type="button" className="mb-[5px] h-3 w-[42px] shrink-0 self-center border border-[#ddd] bg-white">Close</button>
      <Panel title="Solver messages" icon="solver">
        <div className="flex h-[27px] items-center justify-between pr-2 pl-[7px] font-['Roboto',sans-serif] text-[#25803c]">
          Fully constrained
          <SplitButton label="Refresh solver">
            <RefreshCw className="size-2 text-[#41668c]" strokeWidth={4} />
          </SplitButton>
        </div>
      </Panel>
      <Panel title="Constraints" icon="constraints">
        <FilterBar label="Constraints" withEye />
        <ListBox thumb="h-4">
          {constraintIcons.map((icon, i) => (
            <li key={i} className="flex h-[14px] items-center gap-[3px] pl-px">
              <Tick label={`Constraint${i + 1}`} />
              <Icon name={icon} className="size-[13px]" />
              <span>Constraint{i + 1}</span>
            </li>
          ))}
          <li className="flex h-[14px] items-center pl-px">
            <Tick label="Constraint8" />
          </li>
        </ListBox>
      </Panel>
      <Panel title="Elements" icon="edgeStart">
        <FilterBar label="Elements" />
        <ListBox thumb="h-[50px]">
          {[1, 2, 3, 4, 5, 6, 7, 8].map((n) => (
            <li key={n} className="flex h-[14px] items-center gap-[2px] pl-px">
              <Tick label={`${n}-Line`} />
              <Icon name="edge" className="ml-px size-[13px]" />
              <Icon name="edgeStart" className="size-[13px]" />
              <Icon name="edgeEnd" className="size-[13px]" />
              {n < 8 && (
                <>
                  <span className="ml-[4px] h-px w-[6px] bg-[#444]" />
                  <span className="pl-[3px]">{n}-Line</span>
                </>
              )}
            </li>
          ))}
        </ListBox>
      </Panel>
    </div>
  </aside>
);

const StatusBar = () => (
  <footer className="flex h-4 shrink-0 items-center font-['Roboto',sans-serif] text-[6px] text-[#222]">
    <span className="pl-px">Valid, Internal name: Chamfer001</span>
    <div className="ml-auto flex items-center pr-[2px]">
      <button type="button" className="flex w-[51px] items-center gap-[3px]">
        <span className="h-[6px] w-2 bg-[#e0b820]" />
        19
        <Caret className="mr-[12px] ml-auto" />
      </button>
      <button type="button" className="flex w-[42px] items-center gap-[2px]">
        <Icon name="mouse" className="size-[7px]" />
        Blender
        <Caret className="ml-1" />
      </button>
      <button type="button" className="flex items-center gap-[3px] whitespace-nowrap">
        169.84 mm x 100.00 mm
        <Caret />
      </button>
    </div>
  </footer>
);

const App = () => (
  <div className="flex h-screen flex-col overflow-hidden bg-[#f0f0f0] font-['Noto_Sans',sans-serif]">
    <Header />
    <div className="flex min-h-0 flex-1">
      <ModelDock />
      <Viewport />
      <TasksDock />
    </div>
    <StatusBar />
  </div>
);

export default App;
